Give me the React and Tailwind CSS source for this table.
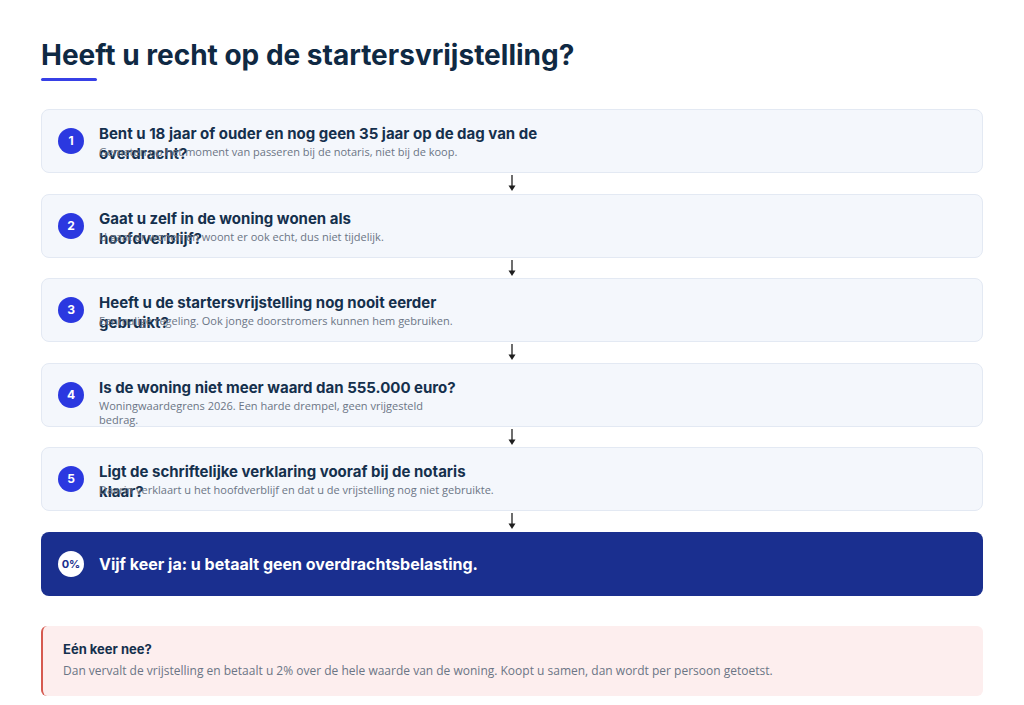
const steps = [
  {
    n: 1,
    title: ["Bent u 18 jaar of ouder en nog geen 35 jaar op de dag van de", "overdracht?"],
    text: ["Gemeten op het moment van passeren bij de notaris, niet bij de koop."],
  },
  {
    n: 2,
    title: ["Gaat u zelf in de woning wonen als", "hoofdverblijf?"],
    text: ["U gaat er wonen en woont er ook echt, dus niet tijdelijk."],
  },
  {
    n: 3,
    title: ["Heeft u de startersvrijstelling nog nooit eerder", "gebruikt?"],
    text: ["Eenmalige regeling. Ook jonge doorstromers kunnen hem gebruiken."],
  },
  {
    n: 4,
    title: ["Is de woning niet meer waard dan 555.000 euro?"],
    text: ["Woningwaardegrens 2026. Een harde drempel, geen vrijgesteld", "bedrag."],
  },
  {
    n: 5,
    title: ["Ligt de schriftelijke verklaring vooraf bij de notaris", "klaar?"],
    text: ["Daarin verklaart u het hoofdverblijf en dat u de vrijstelling nog niet gebruikte."],
  },
];

const Arrow = () => (
  <div className="flex h-[20.6px] justify-center">
    <svg width="10" height="20" viewBox="0 0 10 20" className="text-[#1f1f1f]">
      <line x1="5" y1="2" x2="5" y2="13" stroke="currentColor" strokeWidth="1.3" />
      <path d="M1.5 12.5 L8.5 12.5 L5 18 Z" fill="currentColor" />
    </svg>
  </div>
);

const Step = ({ step }) => (
  <div className="flex h-16 items-center gap-[15px] rounded-lg border border-[#e3e9f3] bg-[#f4f7fc] pl-[16px]">
    <div className="flex h-[26px] w-[26px] shrink-0 items-center justify-center rounded-full bg-[#2b38e0] font-['Inter',sans-serif] text-[12px] font-bold text-white">
      {step.n}
    </div>
    <div className="self-start pt-[14px]">
      <p className="h-5 font-['Inter',sans-serif] text-[15px] font-bold leading-5 text-[#15304d]">
        {step.title.map((line, i) => (
          <span key={i} className="block">
            {line}
          </span>
        ))}
      </p>
      <p className="mt-[1px] font-['Open_Sans',sans-serif] text-[11px] leading-[14px] text-[#6b7585]">
        {step.text.map((line, i) => (
          <span key={i} className="block">
            {line}
          </span>
        ))}
      </p>
    </div>
  </div>
);

const App = () => {
  return (
    <div className="min-h-[705px] bg-white px-[41px] pt-[37px] pb-4">
      <h1 className="font-['Inter',sans-serif] text-[28px] font-bold leading-9 text-[#0f2943]">
        Heeft u recht op de startersvrijstelling?
      </h1>
      <div className="mt-[5px] h-[3px] w-[56px] rounded-full bg-[#3740e6]" />

      <div className="mt-[28px]">
        {steps.map((step) => (
          <div key={step.n}>
            <Step step={step} />
            <Arrow />
          </div>
        ))}

        <div className="flex h-16 items-center gap-[15px] rounded-lg bg-[#1a2f8f] pl-[17px]">
          <div className="flex h-[26px] w-[26px] shrink-0 items-center justify-center rounded-full bg-white font-['Inter',sans-serif] text-[11px] font-bold text-[#1a2f8f]">
            0%
          </div>
          <p className="font-['Inter',sans-serif] text-[16px] font-bold text-white">
            Vijf keer ja: u betaalt geen overdrachtsbelasting.
          </p>
        </div>
      </div>

      <div className="mt-[30px] rounded-md border-l-2 border-[#d65a50] bg-[#fdeeee] px-5 pt-[13px] pb-[15px]">
        <p className="font-['Inter',sans-serif] text-[13px] font-bold leading-5 text-[#15304d]">
          Eén keer nee?
        </p>
        <p className="mt-[2px] font-['Open_Sans',sans-serif] text-[12px] leading-5 text-[#6b7585]">
          Dan vervalt de vrijstelling en betaalt u 2% over de hele waarde van de woning. Koopt u samen, dan wordt per persoon getoetst.
        </p>
      </div>
    </div>
  );
};

export default App;
